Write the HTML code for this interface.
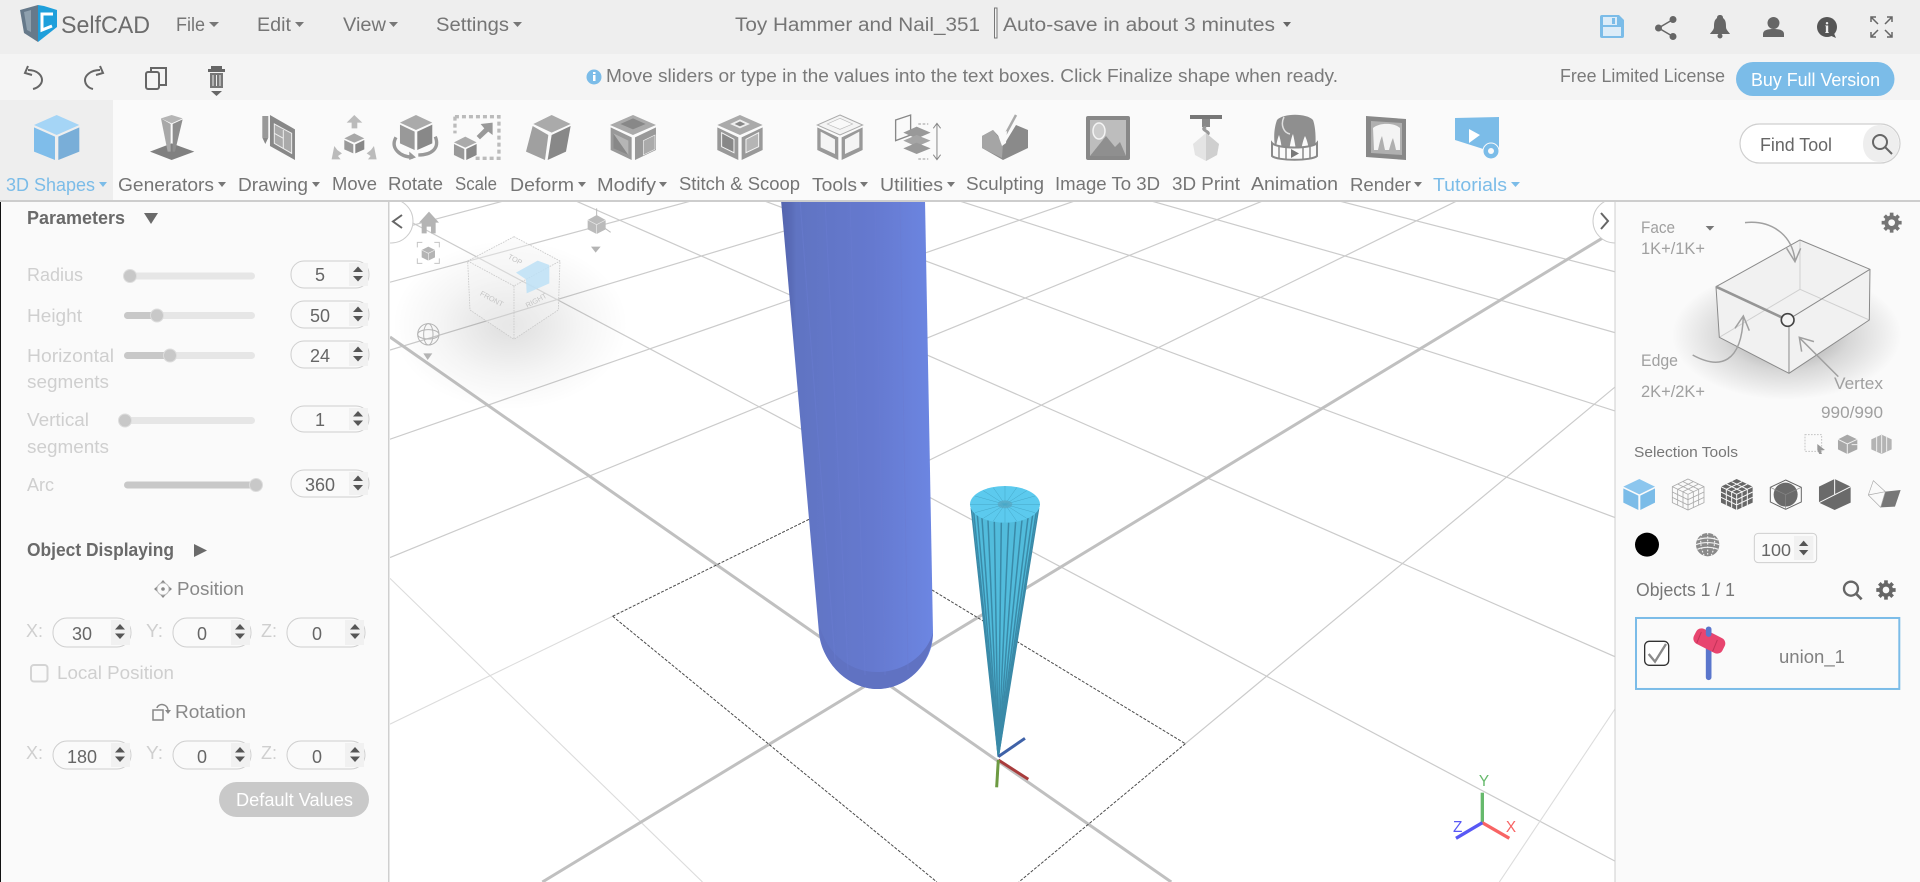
<!DOCTYPE html>
<html><head><meta charset="utf-8"><title>SelfCAD</title>
<style>
html,body{margin:0;padding:0;background:#fff;width:1920px;height:882px;overflow:hidden}
svg{display:block}
text{font-family:"Liberation Sans",sans-serif;fill:#757575}
.h{font-size:19px}
.t{font-size:18.5px}
.l{font-size:18px;fill:#cfcfcf}
.v{font-size:18px;fill:#666;text-anchor:middle}
.b{font-size:18px;font-weight:bold;fill:#6a6a6a}
.r{font-size:16.5px;fill:#a0a0a0}
.s{stroke:#cfcfcf;fill:#fafafa;stroke-width:1}
.g line,.g polyline{vector-effect:non-scaling-stroke;fill:none}
.thin line{stroke:#cbcbcb;stroke-width:1.2}
.thin2 line{stroke:#dcdcdc;stroke-width:1.1}
.thick line{stroke:#c0c0c0;stroke-width:3}
.dash line{stroke:#4a4a4a;stroke-width:1;stroke-dasharray:3 1.5}
</style></head><body>
<svg xmlns="http://www.w3.org/2000/svg" width="1920" height="882" viewBox="0 0 1920 882">
<defs>
<g id="ar"><polygon points="-5,-2.500 5,-2.500 0,-8" fill="#555"/><polygon points="-5,1.500 5,1.500 0,7" fill="#555"/></g>
<linearGradient id="cyl" x1="0" x2="1" y1="0" y2="0"><stop offset="0" stop-color="#5565ae"/><stop offset=".07" stop-color="#5a6cb8"/><stop offset=".1" stop-color="#6074c2"/><stop offset=".6" stop-color="#6579cf"/><stop offset="1" stop-color="#6c86e2"/></linearGradient>
<radialGradient id="sh"><stop offset="0" stop-color="#000" stop-opacity=".42"/><stop offset=".55" stop-color="#000" stop-opacity=".14"/><stop offset="1" stop-color="#000" stop-opacity="0"/></radialGradient>
<radialGradient id="sh2"><stop offset="0" stop-color="#000" stop-opacity=".13"/><stop offset=".6" stop-color="#000" stop-opacity=".04"/><stop offset="1" stop-color="#000" stop-opacity="0"/></radialGradient>
<clipPath id="cv"><rect x="390" y="202" width="1225" height="680"/></clipPath>
</defs>

<rect width="1920" height="882" fill="#fff"/>

<!-- GRID -->
<g clip-path="url(#cv)">
<g class="g" transform="translate(390 200) scale(.78125 .43495)">
<g class="thin">
<line x1="541" y1="730" x2="1368" y2="0"/>
<line x1="0" y1="822" x2="1120" y2="0"/>
<line x1="0" y1="550" x2="880" y2="0"/>
<line x1="0" y1="345" x2="636" y2="0"/>
<line x1="0" y1="189" x2="390" y2="0"/>
<line x1="0" y1="72" x2="150" y2="0"/>
<line x1="1018" y1="1250" x2="1568" y2="430"/>
<line x1="0" y1="25" x2="1568" y2="1520"/>
<line x1="235" y1="0" x2="1568" y2="1050"/>
<line x1="476" y1="0" x2="1568" y2="730"/>
<line x1="725" y1="0" x2="1568" y2="485"/>
<line x1="970" y1="0" x2="1568" y2="305"/>
<line x1="1210" y1="0" x2="1568" y2="165"/>
</g>
<g class="thin2">
<line x1="0" y1="1205" x2="285" y2="957"/>
<line x1="1420" y1="1568" x2="1568" y2="1170"/>
<line x1="0" y1="870" x2="400" y2="1568"/>
</g>
<g class="thick">
<line x1="195" y1="1568" x2="1568" y2="70"/>
<line x1="0" y1="315" x2="1000" y2="1568"/>
</g>
<g class="dash">
<line x1="285" y1="957" x2="541" y2="730"/>
<line x1="285" y1="957" x2="700" y2="1568"/>
<line x1="541" y1="730" x2="1018" y2="1250"/>
<line x1="1018" y1="1250" x2="805" y2="1568"/>
</g>
</g>

<!-- view cube shadow & cube -->
<ellipse cx="510" cy="325" rx="118" ry="85" fill="url(#sh2)"/>
<g transform="translate(390 200) scale(.3333)">
<polygon points="372,110 510,183 505,330 372,418 240,330 233,183" fill="#f4f4f4" fill-opacity=".4"/>
<g fill="none" stroke="#c9c9c9" stroke-width="2.500" stroke-dasharray="5 3">
<polygon points="372,110 510,183 505,330 372,418 240,330 233,183"/>
<polyline points="233,183 372,258 510,183"/><line x1="372" y1="258" x2="372" y2="418"/>
</g>
<polygon points="378,218 443,182 478,195 478,250 410,280 408,238" fill="#bde0f6" fill-opacity=".85"/>
<text x="372" y="185" font-size="22" style="fill:#c4c4c4" transform="rotate(28 372 185)" text-anchor="middle">TOP</text>
<text x="302" y="303" font-size="22" style="fill:#c4c4c4" transform="rotate(28 302 303)" text-anchor="middle">FRONT</text>
<text x="442" y="308" font-size="22" style="fill:#c4c4c4" transform="rotate(-28 442 308)" text-anchor="middle">RIGHT</text>
<!-- home -->
<polygon points="117,35 147,68 137,68 137,100 123,100 123,80 110,80 110,100 95,100 95,68 87,68" fill="#b4b4b4"/>
<g fill="none" stroke="#c4c4c4" stroke-width="3"><path d="M82 142V127H97M133 127H148V142M148 175V190H133M97 190H82V175"/></g>
<polygon points="115,140 135,150 135,172 115,182 95,172 95,150" fill="#b4b4b4"/>
<path d="M95 150L115 160L135 150M115 160V182" stroke="#eee" stroke-width="2" fill="none"/>
<!-- gizmo -->
<path d="M620 25V55M645 85L662 97" stroke="#bbb" stroke-width="3"/>
<polygon points="620,45 647,60 647,88 620,102 593,88 593,60" fill="#bbb"/>
<path d="M593 60L620 74L647 60M620 74V102" stroke="#eee" stroke-width="2" fill="none"/>
<polygon points="603,140 632,140 617,158" fill="#b4b4b4"/>
<!-- globe -->
<g fill="none" stroke="#b4b4b4" stroke-width="3"><circle cx="115" cy="403" r="32"/><ellipse cx="115" cy="403" rx="14" ry="32"/><ellipse cx="115" cy="403" rx="32" ry="14"/></g>
<polygon points="100,460 127,460 113,480" fill="#b4b4b4"/>
</g>

<!-- CYLINDER -->
<path d="M781 200L819 633C822 665 852 689 877 689C905 689 933 665 933 633L925 200Z" fill="url(#cyl)"/>
<path d="M819 625L821 640C826 668 852 689 877 689C905 689 930 668 933 633C926 655 905 672 877 672C850 672 828 655 819 625Z" fill="#6072c2"/>
<g stroke="#6a7cd2" stroke-width="1" opacity=".5"><line x1="800" y1="200" x2="835" y2="660"/><line x1="825" y1="200" x2="848" y2="670"/><line x1="850" y1="200" x2="865" y2="675"/><line x1="875" y1="200" x2="885" y2="675"/><line x1="900" y1="200" x2="908" y2="670"/></g>
<!-- CONE -->
<g transform="translate(780 460) scale(.3333)">
<polygon points="572,135 778,135 655,890" fill="#52bcdc"/>
<g stroke="#3a8aa8" stroke-width="4.500">
<line x1="776" y1="144" x2="655" y2="890"/><line x1="769" y1="155" x2="655" y2="890"/><line x1="758" y1="165" x2="655" y2="890"/><line x1="744" y1="174" x2="655" y2="890"/><line x1="726" y1="181" x2="655" y2="890"/><line x1="707" y1="185" x2="655" y2="890"/><line x1="686" y1="188" x2="655" y2="890"/><line x1="664" y1="188" x2="655" y2="890"/><line x1="643" y1="185" x2="655" y2="890"/><line x1="624" y1="181" x2="655" y2="890"/><line x1="606" y1="174" x2="655" y2="890"/><line x1="592" y1="165" x2="655" y2="890"/><line x1="581" y1="155" x2="655" y2="890"/><line x1="574" y1="144" x2="655" y2="890"/>
</g>
<ellipse cx="675" cy="133" rx="105" ry="55" fill="#5ccaee"/>
<ellipse cx="675" cy="133" rx="22" ry="12" fill="#5fb0cc"/>
<g stroke="#46a8c8" stroke-width="1.500"><line x1="570" y1="133" x2="780" y2="133"/><line x1="675" y1="78" x2="675" y2="188"/><line x1="610" y1="92" x2="740" y2="175"/><line x1="740" y1="92" x2="610" y2="175"/><line x1="640" y1="83" x2="710" y2="183"/><line x1="710" y1="83" x2="640" y2="183"/><line x1="585" y1="108" x2="765" y2="158"/><line x1="765" y1="108" x2="585" y2="158"/></g>
<line x1="655" y1="890" x2="735" y2="835" stroke="#3f62a8" stroke-width="9"/>
<line x1="655" y1="900" x2="745" y2="958" stroke="#a83c3c" stroke-width="9"/>
<line x1="655" y1="900" x2="650" y2="982" stroke="#6d9a42" stroke-width="9"/>
</g>
<!-- axis indicator -->
<g transform="translate(1420 750) scale(.3333)">
<line x1="187" y1="128" x2="187" y2="220" stroke="#66b96c" stroke-width="10"/>
<line x1="187" y1="218" x2="268" y2="265" stroke="#f86464" stroke-width="10"/>
<line x1="187" y1="218" x2="108" y2="265" stroke="#5858f5" stroke-width="10"/>
<text x="192" y="108" font-size="46" style="fill:#66b96c" text-anchor="middle">Y</text>
<text x="273" y="246" font-size="46" style="fill:#f86464" text-anchor="middle">X</text>
<text x="113" y="246" font-size="46" style="fill:#5858f5" text-anchor="middle">Z</text>
</g>
<!-- collapse arrows -->
<circle cx="391" cy="221" r="22" fill="#fff" stroke="#ccc"/>
<path d="M402 215L393 221.500L402 228" fill="none" stroke="#666" stroke-width="2"/>
<circle cx="1615" cy="221" r="22" fill="#fff" stroke="#ccc"/>
<path d="M1601 213L1608 221L1601 229" fill="none" stroke="#666" stroke-width="2"/>
</g>

<!-- LEFT PANEL -->
<rect x="0" y="200" width="389" height="682" fill="#fafafa"/>
<rect x="0" y="200" width="1" height="682" fill="#111"/>
<rect x="388" y="200" width="1.500" height="682" fill="#cfcfcf"/>
<text class="b" x="27" y="224" textLength="98" lengthAdjust="spacingAndGlyphs">Parameters</text>
<polygon points="144,213 158,213 151,224" fill="#6a6a6a"/>

<text class="l" x="27" y="281" textLength="56" lengthAdjust="spacingAndGlyphs">Radius</text>
<rect x="124" y="272.500" width="131" height="7" rx="3.500" fill="#e6e6e6"/>
<circle cx="130" cy="276" r="6.500" fill="#c8c8c8" stroke="#ddd"/>
<rect class="s" x="291" y="261" width="78" height="27" rx="13"/>
<rect x="349" y="263" width="19" height="23" fill="#f1f1f1"/>
<use href="#ar" x="358" y="274.500"/>
<text class="v" x="320" y="281">5</text>

<text class="l" x="27" y="322" textLength="55" lengthAdjust="spacingAndGlyphs">Height</text>
<rect x="124" y="312" width="131" height="7" rx="3.500" fill="#e6e6e6"/>
<rect x="124" y="312" width="33" height="7" rx="3.500" fill="#c8c8c8"/>
<circle cx="157" cy="315.500" r="6.500" fill="#c8c8c8" stroke="#ddd"/>
<rect class="s" x="291" y="301" width="78" height="27" rx="13"/>
<rect x="349" y="303" width="19" height="23" fill="#f1f1f1"/>
<use href="#ar" x="358" y="314.500"/>
<text class="v" x="320" y="322">50</text>

<text class="l" x="27" y="362" textLength="87" lengthAdjust="spacingAndGlyphs">Horizontal</text>
<text class="l" x="27" y="388" textLength="82" lengthAdjust="spacingAndGlyphs">segments</text>
<rect x="124" y="352" width="131" height="7" rx="3.500" fill="#e6e6e6"/>
<rect x="124" y="352" width="46" height="7" rx="3.500" fill="#c8c8c8"/>
<circle cx="170" cy="355.500" r="6.500" fill="#c8c8c8" stroke="#ddd"/>
<rect class="s" x="291" y="341" width="78" height="27" rx="13"/>
<rect x="349" y="343" width="19" height="23" fill="#f1f1f1"/>
<use href="#ar" x="358" y="354.500"/>
<text class="v" x="320" y="362">24</text>

<text class="l" x="27" y="426" textLength="62" lengthAdjust="spacingAndGlyphs">Vertical</text>
<text class="l" x="27" y="453" textLength="82" lengthAdjust="spacingAndGlyphs">segments</text>
<rect x="124" y="417" width="131" height="7" rx="3.500" fill="#e6e6e6"/>
<circle cx="125" cy="420.500" r="6.500" fill="#c8c8c8" stroke="#ddd"/>
<rect class="s" x="291" y="406" width="78" height="26" rx="13"/>
<rect x="349" y="408" width="19" height="22" fill="#f1f1f1"/>
<use href="#ar" x="358" y="419"/>
<text class="v" x="320" y="426">1</text>

<text class="l" x="27" y="491" textLength="27" lengthAdjust="spacingAndGlyphs">Arc</text>
<rect x="124" y="481.500" width="131" height="7" rx="3.500" fill="#c8c8c8"/>
<circle cx="256" cy="485" r="6.500" fill="#c8c8c8" stroke="#ddd"/>
<rect class="s" x="291" y="470" width="78" height="27" rx="13"/>
<rect x="349" y="472" width="19" height="23" fill="#f1f1f1"/>
<use href="#ar" x="358" y="483.500"/>
<text class="v" x="320" y="491">360</text>

<text class="b" x="27" y="556" textLength="147" lengthAdjust="spacingAndGlyphs">Object Displaying</text>
<polygon points="194,544 194,557 207,550.500" fill="#6a6a6a"/>

<!-- position -->
<g fill="#888"><circle cx="163" cy="589" r="1.800"/><polygon points="163,580 160,583.500 166,583.500"/><polygon points="163,598 160,594.500 166,594.500"/><polygon points="154,589 157.500,586 157.500,592"/><polygon points="172,589 168.500,586 168.500,592"/></g>
<circle cx="163" cy="589" r="6" fill="none" stroke="#bbb" stroke-width="1"/>
<text x="177" y="595" font-size="18" style="fill:#888" textLength="67" lengthAdjust="spacingAndGlyphs">Position</text>

<text class="l" x="26" y="637" textLength="17" lengthAdjust="spacingAndGlyphs">X:</text>
<rect class="s" x="53" y="618" width="78" height="29" rx="14"/>
<rect x="111" y="620" width="19" height="25" fill="#f1f1f1"/>
<use href="#ar" x="120" y="632"/>
<text class="v" x="82" y="640">30</text>
<text class="l" x="146" y="637" textLength="17" lengthAdjust="spacingAndGlyphs">Y:</text>
<rect class="s" x="173" y="618" width="78" height="29" rx="14"/>
<rect x="231" y="620" width="19" height="25" fill="#f1f1f1"/>
<use href="#ar" x="240" y="632"/>
<text class="v" x="202" y="640">0</text>
<text class="l" x="261" y="637" textLength="16" lengthAdjust="spacingAndGlyphs">Z:</text>
<rect class="s" x="287" y="618" width="78" height="29" rx="14"/>
<rect x="345" y="620" width="19" height="25" fill="#f1f1f1"/>
<use href="#ar" x="355" y="632"/>
<text class="v" x="317" y="640">0</text>

<rect x="31" y="665" width="16.500" height="16.500" rx="3" fill="#fafafa" stroke="#d4d4d4" stroke-width="2"/>
<text class="l" x="57" y="679" textLength="117" lengthAdjust="spacingAndGlyphs">Local Position</text>

<g fill="none" stroke="#888" stroke-width="1.500"><rect x="153" y="710" width="10" height="10"/><path d="M157 708C158 703 168 703 168 711"/></g>
<polygon points="165,710 171,710 168,714" fill="#888"/>
<text x="175" y="718" font-size="18" style="fill:#888" textLength="71" lengthAdjust="spacingAndGlyphs">Rotation</text>

<text class="l" x="26" y="759" textLength="17" lengthAdjust="spacingAndGlyphs">X:</text>
<rect class="s" x="53" y="741" width="78" height="28" rx="14"/>
<rect x="111" y="743" width="19" height="24" fill="#f1f1f1"/>
<use href="#ar" x="120" y="755"/>
<text class="v" x="82" y="763">180</text>
<text class="l" x="146" y="759" textLength="17" lengthAdjust="spacingAndGlyphs">Y:</text>
<rect class="s" x="173" y="741" width="78" height="28" rx="14"/>
<rect x="231" y="743" width="19" height="24" fill="#f1f1f1"/>
<use href="#ar" x="240" y="755"/>
<text class="v" x="202" y="763">0</text>
<text class="l" x="261" y="759" textLength="16" lengthAdjust="spacingAndGlyphs">Z:</text>
<rect class="s" x="287" y="741" width="78" height="28" rx="14"/>
<rect x="345" y="743" width="19" height="24" fill="#f1f1f1"/>
<use href="#ar" x="355" y="755"/>
<text class="v" x="317" y="763">0</text>

<rect x="219" y="782" width="150" height="35" rx="17.500" fill="#c9c9c9"/>
<text x="236" y="806" font-size="18" style="fill:#fff" textLength="117" lengthAdjust="spacingAndGlyphs">Default Values</text>

<!-- RIGHT PANEL -->
<rect x="1615" y="200" width="305" height="682" fill="#fafafa"/>
<rect x="1614.500" y="200" width="1" height="682" fill="#cfcfcf"/>
<g transform="translate(1610 200) scale(.3333)">
<ellipse cx="530" cy="405" rx="345" ry="195" fill="url(#sh)"/>
<polygon points="570,120 780,208 778,360 537,520 328,412 318,260" fill="#f1f1f1"/>
<g fill="none" stroke="#d0d0d0" stroke-width="3"><line x1="570" y1="120" x2="570" y2="268"/><line x1="570" y1="268" x2="778" y2="360"/><line x1="570" y1="268" x2="328" y2="412"/></g>
<g fill="none" stroke="#8a8a8a" stroke-width="3"><polygon points="570,120 780,208 778,360 537,520 328,412 318,260" stroke-linejoin="round"/><line x1="533" y1="360" x2="780" y2="208"/><line x1="537" y1="380" x2="537" y2="520"/></g>
<line x1="318" y1="260" x2="515" y2="352" stroke="#969696" stroke-width="8"/>
<circle cx="533" cy="360" r="19" fill="#f4f4f4" stroke="#444" stroke-width="5"/>
<g fill="none" stroke="#a0a0a0" stroke-width="4.500">
<path d="M405 68C480 60 545 100 555 180M530 145L555 185L572 145"/>
<path d="M248 465C330 510 395 490 400 350M375 385L400 348L418 392"/>
<path d="M685 530L570 415M575 455L568 412L612 425"/>
</g>
<polygon points="287,78 313,78 300,92" fill="#777"/>
<g transform="translate(845 68)" fill="#757575"><circle r="22"/><g stroke="#757575" stroke-width="11"><line x1="0" y1="-30" x2="0" y2="30"/><line x1="-30" y1="0" x2="30" y2="0"/><line x1="-21" y1="-21" x2="21" y2="21"/><line x1="-21" y1="21" x2="21" y2="-21"/></g><circle r="10" fill="#fafafa"/></g>
</g>
<text class="r" x="1641" y="233" textLength="34" lengthAdjust="spacingAndGlyphs">Face</text>
<text class="r" x="1641" y="254" textLength="64" lengthAdjust="spacingAndGlyphs">1K+/1K+</text>
<text class="r" x="1641" y="366" textLength="37" lengthAdjust="spacingAndGlyphs">Edge</text>
<text class="r" x="1641" y="397" textLength="64" lengthAdjust="spacingAndGlyphs">2K+/2K+</text>
<text class="r" x="1834" y="389" textLength="49" lengthAdjust="spacingAndGlyphs">Vertex</text>
<text class="r" x="1821" y="418" textLength="62" lengthAdjust="spacingAndGlyphs">990/990</text>

<g transform="translate(1610 430) scale(.3333)">
<rect x="585" y="14" width="50" height="50" fill="none" stroke="#c4c4c4" stroke-width="3" stroke-dasharray="5 4"/>
<polygon points="622,42 645,60 632,62 636,72 628,72 622,60" fill="#999"/>
<polygon points="712,14 742,28 742,58 712,72 684,58 684,28" fill="#a8a8a8"/>
<path d="M684 28L712 42L742 28M712 42V72M725 44H745" stroke="#f0f0f0" stroke-width="3" fill="none"/>
<polygon points="815,14 845,28 845,58 815,72 784,58 784,28" fill="#b4b4b4"/>
<path d="M800 20V65M815 15V70M830 20V65" stroke="#eee" stroke-width="3" fill="none"/>
<!-- row icons -->
<polygon points="88,147 135,170 88,193 40,170" fill="#8cc6ee"/>
<polygon points="40,175 85,197 85,240 40,218" fill="#7bbce8"/>
<polygon points="91,197 135,175 135,218 91,240" fill="#7bbce8"/>
<g fill="none" stroke="#aaa" stroke-width="2.500">
<polygon points="234,147 282,170 282,218 234,240 187,218 187,170"/><path d="M187 170L234 193L282 170M234 193V240"/>
<path d="M203 162L250 185M219 155L266 178M250 155L203 178M266 162L219 185M203 178V226M219 186V233M250 186V233M266 178V226M187 186L234 209L282 186M187 202L234 225L282 202"/>
</g>
<polygon points="380,147 428,170 428,218 380,240 333,218 333,170" fill="#666"/>
<g fill="none" stroke="#fafafa" stroke-width="3"><path d="M333 170L380 193L428 170M380 193V240M349 162L396 185M365 155L412 178M396 155L349 178M412 162L365 185M349 178V226M365 186V233M396 186V233M412 178V226M333 186L380 209L428 186M333 202L380 225L428 202"/></g>
<polygon points="527,150 574,172 574,216 527,238 481,216 481,172" fill="none" stroke="#666" stroke-width="3"/>
<circle cx="527" cy="194" r="36" fill="#6a6a6a"/>
<path d="M481 172L527 194L574 172M527 194V238" fill="none" stroke="#888" stroke-width="2"/>
<polygon points="674,147 722,170 722,218 674,240 627,218 627,170" fill="#6a6a6a"/>
<path d="M627 218L722 170M674 147V193" stroke="#fafafa" stroke-width="3" fill="none"/>
<polygon points="826,185 872,180 855,230 812,232" fill="#777"/>
<path d="M790 152L826 185L812 232L775 195Z M775 195L826 185" fill="none" stroke="#aaa" stroke-width="2"/>
<!-- color -->
<circle cx="111" cy="344" r="36" fill="#000"/>
<circle cx="293" cy="344" r="35" fill="#8a8a8a"/>
<g stroke="#eee" stroke-width="3.500" fill="none"><path d="M262 330C280 322 305 322 324 330M258 344C280 336 305 336 328 344M262 358C280 350 305 350 324 358"/><path d="M275 313C268 335 275 360 282 376M293 309V379M311 313C318 335 311 360 304 376" stroke-dasharray="5 5"/></g>
<rect x="433" y="310" width="187" height="88" rx="12" fill="#fafafa" stroke="#cfcfcf" stroke-width="3"/>
<rect x="552" y="318" width="58" height="72" fill="#f1f1f1"/>
<polygon points="567,348 595,348 581,332" fill="#555"/><polygon points="567,360 595,360 581,376" fill="#555"/>
<text x="453" y="378" font-size="54" style="fill:#666" textLength="90" lengthAdjust="spacingAndGlyphs">100</text>
<!-- search gear -->
<circle cx="723" cy="476" r="21" fill="none" stroke="#666" stroke-width="7"/>
<line x1="739" y1="492" x2="755" y2="508" stroke="#666" stroke-width="8"/>
<g transform="translate(828 480)" fill="#666"><circle r="21"/><g stroke="#666" stroke-width="11"><line x1="0" y1="-29" x2="0" y2="29"/><line x1="-29" y1="0" x2="29" y2="0"/><line x1="-20" y1="-20" x2="20" y2="20"/><line x1="-20" y1="20" x2="20" y2="-20"/></g><circle r="10" fill="#fafafa"/></g>
<!-- item -->
<rect x="78" y="564" width="790" height="213" fill="#fafafa" stroke="#7bbce8" stroke-width="6"/>
<rect x="104" y="634" width="72" height="72" rx="14" fill="#fff" stroke="#333" stroke-width="4"/>
<path d="M116 672L135 695L168 642" fill="none" stroke="#8a8a8a" stroke-width="7"/>
<line x1="296" y1="600" x2="296" y2="742" stroke="#5a76cc" stroke-width="17" stroke-linecap="round"/>
<rect x="250" y="608" width="96" height="50" rx="18" fill="#e8456f" transform="rotate(27 298 633)"/>
<path d="M274 606L260 640M322 630L308 664" stroke="#c23358" stroke-width="3"/>
<line x1="296" y1="598" x2="296" y2="612" stroke="#5a76cc" stroke-width="17" stroke-linecap="round"/>
</g>
<text x="1634" y="457" font-size="15" style="fill:#777" textLength="104" lengthAdjust="spacingAndGlyphs">Selection Tools</text>
<text x="1636" y="596" font-size="18" style="fill:#777" textLength="99" lengthAdjust="spacingAndGlyphs">Objects 1 / 1</text>
<text x="1779" y="663" font-size="18" style="fill:#808080" textLength="66" lengthAdjust="spacingAndGlyphs">union_1</text>

<!-- HEADER -->
<rect width="1920" height="54" fill="#eee"/>
<rect y="54" width="1920" height="46" fill="#f4f4f4"/>
<rect y="100" width="1920" height="100" fill="#fafafa"/>
<rect y="100" width="113" height="100" fill="#eee"/>
<rect y="200" width="1920" height="2" fill="#cdcdcd"/>

<!-- logo -->
<polygon points="20,10 38,5 38,42 24,33" fill="#66798a"/>
<polygon points="38,5 44,6 57,10 57,27 38,42" fill="#1e9fdb"/>
<path d="M53 14H42V30L52 26" fill="none" stroke="#fff" stroke-width="3"/>
<polygon points="24,12 31,10 31,32 27,30" fill="#8ea0ae"/>
<text x="61" y="33" font-size="24" style="fill:#6c6c6c" textLength="89" lengthAdjust="spacingAndGlyphs">SelfCAD</text>

<text class="h" x="176" y="31" textLength="29" lengthAdjust="spacingAndGlyphs">File</text>
<polygon points="209,22 219,22 214,27" fill="#777"/>
<text class="h" x="257" y="31" textLength="34" lengthAdjust="spacingAndGlyphs">Edit</text>
<polygon points="295,22 304,22 299.500,27" fill="#777"/>
<text class="h" x="343" y="31" textLength="43" lengthAdjust="spacingAndGlyphs">View</text>
<polygon points="389,22 398,22 393.500,27" fill="#777"/>
<text class="h" x="436" y="31" textLength="73" lengthAdjust="spacingAndGlyphs">Settings</text>
<polygon points="513,22 522,22 517.500,27" fill="#777"/>
<text class="h" x="735" y="31" textLength="245" lengthAdjust="spacingAndGlyphs">Toy Hammer and Nail_351</text>
<rect x="994.500" y="8" width="2.500" height="30" fill="#f4f4f4" stroke="#777" stroke-width="1"/>
<text class="h" x="1003" y="31" textLength="272" lengthAdjust="spacingAndGlyphs">Auto-save in about 3 minutes</text>
<polygon points="1283,22 1291,22 1287,27" fill="#666"/>

<!-- right icons -->
<path d="M1602 15H1619L1624 20V36Q1624 38 1622 38H1602Q1600 38 1600 36V17Q1600 15 1602 15Z" fill="#7bbce8"/>
<rect x="1603" y="27" width="18" height="9" fill="#dcecf8"/>
<rect x="1603" y="17" width="14" height="8" fill="#dcecf8"/><rect x="1612" y="18" width="3" height="6" fill="#7bbce8"/>
<g fill="#666"><circle cx="1673" cy="19.500" r="3.500"/><circle cx="1658.500" cy="28" r="3.500"/><circle cx="1673" cy="36.500" r="3.500"/></g>
<path d="M1673 19.500L1658.500 28L1673 36.500" fill="none" stroke="#666" stroke-width="1.500"/>
<path d="M1720 15C1722 15 1723 16 1723 18C1726 20 1726 24 1726 27C1726 30 1729 32 1730 34H1710C1711 32 1714 30 1714 27C1714 24 1714 20 1717 18C1717 16 1718 15 1720 15Z" fill="#666"/>
<circle cx="1720" cy="36" r="2.500" fill="#666"/>
<circle cx="1773.500" cy="23" r="6" fill="#666"/>
<path d="M1763 37V34C1763 30 1768 29 1773.500 29C1779 29 1784 30 1784 34V37Z" fill="#666"/>
<circle cx="1827" cy="27" r="10" fill="#555"/>
<polygon points="1829,35 1836,38 1833,31" fill="#555"/>
<text x="1827" y="33" font-size="16" font-weight="bold" text-anchor="middle" style="fill:#eee;font-family:'Liberation Serif',serif">i</text>
<g fill="none" stroke="#666" stroke-width="1.500"><path d="M1871 17L1878 24M1871 22V17H1876M1892 17L1885 24M1892 22V17H1887M1871 37L1878 30M1871 32V37H1876M1892 37L1885 30M1892 32V37H1887"/></g>

<!-- second bar -->
<g fill="none" stroke="#666" stroke-width="2">
<path d="M28 70C38 70 42 76 42 80C42 84 38 88 33 89"/><path d="M28 66L25 73L32 75"/>
<path d="M100 70C90 70 85 76 85 80C85 84 88 88 93 89"/><path d="M100 66L103 73L96 75"/>
<rect x="146" y="72" width="13" height="17" rx="2"/><path d="M151 72V68H166V85H159"/>
</g>
<rect x="211" y="66" width="11" height="3" fill="#666"/>
<rect x="208" y="69" width="17" height="3" fill="#666"/>
<rect x="210" y="73" width="13" height="15" fill="#777"/>
<path d="M213 75V86M216.500 75V86M220 75V86" stroke="#eee" stroke-width="1"/>
<polygon points="211,91 222,91 216.500,96" fill="#666"/>

<circle cx="594" cy="77" r="7.500" fill="#7bbce8"/>
<rect x="593" y="75" width="2.500" height="6" fill="#fff"/><rect x="593" y="72" width="2.500" height="2" fill="#fff"/>
<text x="606" y="82" font-size="18" style="fill:#7a7a7a" textLength="732" lengthAdjust="spacingAndGlyphs">Move sliders or type in the values into the text boxes. Click Finalize shape when ready.</text>
<text x="1560" y="82" font-size="18" style="fill:#7a7a7a" textLength="165" lengthAdjust="spacingAndGlyphs">Free Limited License</text>
<rect x="1736" y="62" width="158.500" height="34" rx="17" fill="#7bbce8"/>
<text x="1751" y="86" font-size="18" style="fill:#fff" textLength="129" lengthAdjust="spacingAndGlyphs">Buy Full Version</text>

<!-- toolbar labels -->
<text class="t" style="fill:#7bbce8" x="6" y="191" textLength="89" lengthAdjust="spacingAndGlyphs">3D Shapes</text>
<polygon points="99,182 107,182 103,187" fill="#7bbce8"/>
<text class="t" x="118" y="191" textLength="96" lengthAdjust="spacingAndGlyphs">Generators</text>
<polygon points="218,182 226,182 222,187" fill="#777"/>
<text class="t" x="238" y="191" textLength="70" lengthAdjust="spacingAndGlyphs">Drawing</text>
<polygon points="312,182 320,182 316,187" fill="#777"/>
<text class="t" x="332" y="190" textLength="45" lengthAdjust="spacingAndGlyphs">Move</text>
<text class="t" x="388" y="190" textLength="55" lengthAdjust="spacingAndGlyphs">Rotate</text>
<text class="t" x="455" y="190" textLength="42" lengthAdjust="spacingAndGlyphs">Scale</text>
<text class="t" x="510" y="191" textLength="64" lengthAdjust="spacingAndGlyphs">Deform</text>
<polygon points="578,182 586,182 582,187" fill="#777"/>
<text class="t" x="597" y="191" textLength="59" lengthAdjust="spacingAndGlyphs">Modify</text>
<polygon points="659,182 667,182 663,187" fill="#777"/>
<text class="t" x="679" y="190" textLength="121" lengthAdjust="spacingAndGlyphs">Stitch &amp; Scoop</text>
<text class="t" x="812" y="191" textLength="45" lengthAdjust="spacingAndGlyphs">Tools</text>
<polygon points="860,182 868,182 864,187" fill="#777"/>
<text class="t" x="880" y="191" textLength="63" lengthAdjust="spacingAndGlyphs">Utilities</text>
<polygon points="947,182 955,182 951,187" fill="#777"/>
<text class="t" x="966" y="190" textLength="78" lengthAdjust="spacingAndGlyphs">Sculpting</text>
<text class="t" x="1055" y="190" textLength="105" lengthAdjust="spacingAndGlyphs">Image To 3D</text>
<text class="t" x="1172" y="190" textLength="68" lengthAdjust="spacingAndGlyphs">3D Print</text>
<text class="t" x="1251" y="190" textLength="87" lengthAdjust="spacingAndGlyphs">Animation</text>
<text class="t" x="1350" y="191" textLength="61" lengthAdjust="spacingAndGlyphs">Render</text>
<polygon points="1414,182 1422,182 1418,187" fill="#777"/>
<text class="t" style="fill:#7bbce8" x="1433" y="191" textLength="74" lengthAdjust="spacingAndGlyphs">Tutorials</text>
<polygon points="1511,182 1520,182 1515.500,187" fill="#7bbce8"/>

<!-- toolbar icons (left group) -->
<g transform="translate(0 100) scale(.3333)">
<polygon points="170,45 238,75 170,105 102,75" fill="#a5d5f6"/>
<polygon points="102,82 165,110 165,180 102,155" fill="#7fbdea"/>
<polygon points="175,110 238,82 238,155 175,180" fill="#79aed8"/>
<!-- generators -->
<polygon points="450,155 515,130 583,155 515,180" fill="#808080"/>
<polygon points="483,55 512,72 512,155 503,155" fill="#a8a8a8"/>
<polygon points="518,72 548,58 525,155 518,155" fill="#8e8e8e"/>
<polygon points="483,55 515,45 548,55 515,70" fill="#b5b5b5"/>
<!-- drawing -->
<rect x="787" y="48" width="18" height="65" fill="#999"/><polygon points="787,113 805,113 796,132" fill="#888"/>
<polygon points="810,45 885,88 885,180 810,138" fill="#888"/>
<polygon points="823,72 875,100 875,160 823,130" fill="#aaa" stroke="#eee" stroke-width="3"/>
<path d="M823 100L850 115V90M850 115V145" stroke="#eee" stroke-width="3" fill="none"/>
<!-- move -->
<polygon points="1063,45 1087,68 1072,68 1072,85 1055,85 1055,68 1040,68" fill="#bbb"/>
<polygon points="1063,100 1093,115 1063,128 1033,115" fill="#a8a8a8"/>
<polygon points="1033,120 1060,133 1060,160 1033,148" fill="#999"/>
<polygon points="1066,133 1093,120 1093,148 1066,160" fill="#888"/>
<polygon points="995,178 1003,138 1012,150 1026,160 1014,168 1022,178" fill="#bbb"/>
<polygon points="1130,178 1122,138 1113,150 1100,160 1112,168 1104,178" fill="#bbb"/>
<!-- rotate -->
<path d="M1188 112C1170 145 1200 170 1238 172M1255 165C1295 165 1320 145 1306 110" fill="none" stroke="#999" stroke-width="10"/>
<polygon points="1228,155 1248,172 1228,180" fill="#999"/>
<polygon points="1248,45 1297,68 1248,90 1200,68" fill="#aaa"/>
<polygon points="1200,74 1244,95 1244,150 1200,130" fill="#999"/>
<polygon points="1252,95 1297,74 1297,130 1252,150" fill="#888"/>
<!-- scale -->
<path d="M1365 50H1497V175H1425M1365 50V100" fill="none" stroke="#bbb" stroke-width="10" stroke-dasharray="12 9"/>
<polygon points="1396,110 1430,127 1396,143 1362,127" fill="#aaa"/>
<polygon points="1362,132 1393,147 1393,180 1362,165" fill="#999"/>
<polygon points="1399,147 1430,132 1430,165 1399,180" fill="#888"/>
<polygon points="1478,68 1478,105 1465,95 1440,118 1430,108 1453,85 1442,72" fill="#999"/>
</g>

<g transform="translate(480 100) scale(.3333)">
<!-- deform -->
<polygon points="215,45 272,72 215,98 160,72" fill="#aaa"/>
<polygon points="158,78 205,105 195,180 138,155" fill="#a0a0a0"/>
<polygon points="215,105 272,78 258,155 203,180" fill="#888"/>
<!-- modify -->
<polygon points="459,45 528,75 459,105 390,75" fill="#aaa"/>
<polygon points="459,55 497,72 459,88 421,72" fill="#888"/>
<polygon points="392,82 455,112 455,180 392,150" fill="#999"/>
<polygon points="400,100 445,122 445,165 400,145" fill="#b5b5b5"/>
<polygon points="400,100 445,165 400,145" fill="#888"/>
<polygon points="465,112 528,82 528,150 465,180" fill="#999"/>
<polygon points="490,122 525,105 525,148 490,165" fill="#aaa" stroke="#eee" stroke-width="2"/>
<!-- stitch -->
<polygon points="780,45 848,75 780,105 712,75" fill="#aaa"/>
<polygon points="780,58 810,72 780,85 750,72" fill="#eee"/>
<polygon points="780,64 796,72 780,79 764,72" fill="#888"/>
<polygon points="712,82 775,112 775,180 712,150" fill="#999"/>
<polygon points="725,98 762,118 762,158 725,140" fill="#888" stroke="#f4f4f4" stroke-width="3"/>
<polygon points="785,112 848,82 848,150 785,180" fill="#999"/>
<polygon points="798,118 836,98 836,140 798,158" fill="#b5b5b5" stroke="#f4f4f4" stroke-width="3"/>
<!-- tools -->
<polygon points="1080,45 1148,75 1080,105 1012,75" fill="#f4f4f4" stroke="#aaa" stroke-width="3"/>
<polygon points="1080,55 1118,72 1080,88 1042,72" fill="#f9f9f9" stroke="#bbb" stroke-width="2"/>
<polygon points="1012,82 1075,112 1075,180 1012,150" fill="#999"/>
<polygon points="1022,95 1065,118 1065,162 1022,142" fill="#f4f4f4"/>
<polygon points="1085,112 1148,82 1148,150 1085,180" fill="#999"/>
<polygon points="1095,118 1138,95 1138,142 1095,162" fill="#f4f4f4"/>
<!-- utilities -->
<polygon points="1247,60 1292,45 1292,105 1247,122" fill="none" stroke="#888" stroke-width="4"/>
<polygon points="1310,80 1352,98 1310,116 1270,98" fill="#999"/>
<polygon points="1310,105 1352,122 1310,140 1270,122" fill="#a5a5a5"/>
<polygon points="1310,128 1352,145 1310,162 1270,145" fill="#999"/>
<path d="M1315 72H1345M1315 177H1345" stroke="#999" stroke-width="3" stroke-dasharray="8 5" fill="none"/>
<path d="M1371 72V177M1360 85L1371 70L1382 85M1360 164L1371 179L1382 164" fill="none" stroke="#888" stroke-width="3"/>
</g>

<!-- sculpting -->
<polygon points="982,136 993,130 1005,143 1016,125 1028,130 1028,148 1003,160 982,148" fill="#8a8a8a"/>
<polygon points="982,136 993,130 1003,143 1002,158 982,148" fill="#a5a5a5"/>
<line x1="1003" y1="139" x2="1016" y2="115" stroke="#aaa" stroke-width="2.500"/>
<polygon points="998,135 1007,131 1006,143 1002,146" fill="#fafafa"/>
<!-- image to 3d -->
<rect x="1086" y="116" width="44" height="44" rx="2" fill="#888"/>
<rect x="1090" y="120" width="36" height="36" fill="#bdbdbd"/>
<polygon points="1090,156 1106,136 1115,147 1120,142 1126,156" fill="#8f8f8f"/>
<ellipse cx="1099" cy="131" rx="6" ry="8" fill="#ccc" stroke="#f4f4f4" stroke-width="1.500"/>
<!-- 3d print -->
<rect x="1190" y="115" width="32" height="4" fill="#777"/>
<rect x="1202" y="119" width="8" height="8" fill="#888"/>
<path d="M1206 127C1198 130 1214 132 1206 135" stroke="#999" stroke-width="3" fill="none"/>
<polygon points="1206,133 1219,144 1217,155 1206,161 1195,155 1193,144" fill="#e4e4e4"/>
<polygon points="1206,133 1219,144 1217,155 1206,161" fill="#cfcfcf"/>
<!-- animation -->
<path d="M1277 120C1283 113 1307 113 1313 120C1316 128 1316 142 1315 150H1309C1308 144 1307 140 1305 136C1303 140 1302 146 1301 150H1296C1295 144 1294 138 1293 134C1291 138 1290 146 1289 150H1282C1281 142 1280 138 1279 135C1277 140 1276 146 1276 150C1273 140 1274 128 1277 120Z" fill="#8f8f8f"/>
<path d="M1284 117C1280 125 1284 133 1290 134" fill="none" stroke="#e0e0e0" stroke-width="1.500"/>
<path d="M1272 143C1277 149 1312 149 1317 143V156C1312 161 1277 161 1272 156Z" fill="#fafafa" stroke="#8a8a8a" stroke-width="2"/>
<path d="M1279 147V159M1310 147V159M1286 148V160M1303 148V160" stroke="#8a8a8a" stroke-width="1.500"/>
<polygon points="1291,149 1291,158 1299,153.500" fill="#777"/>
<!-- render -->
<polygon points="1366,116 1406,119 1406,160 1366,157" fill="#888"/>
<polygon points="1371,121 1402,123 1402,155 1371,153" fill="#b0b0b0"/>
<path d="M1373 128C1380 122 1395 123 1400 128V150H1396C1395 145 1394 142 1393 138C1391 142 1390 147 1389 150H1385C1384 146 1383 140 1382 136C1380 140 1379 146 1378 150H1374Z" fill="#f4f4f4"/>
<!-- tutorials -->
<polygon points="1455,118 1499,117 1499,154 1455,140" fill="#7bbce8"/>
<polygon points="1469,129 1480,135 1469,143" fill="#fff"/>
<circle cx="1491" cy="151" r="8" fill="#7bbce8" stroke="#fafafa" stroke-width="1"/>
<circle cx="1491" cy="151" r="3" fill="#fafafa"/>

<!-- find tool -->
<rect x="1740" y="124" width="160" height="39" rx="19.500" fill="#fff" stroke="#cfcfcf" stroke-width="1.200"/>
<path d="M1863 144C1863 134 1869 125 1880 125C1892 125 1899 134 1899 144C1899 154 1892 162 1880 162C1869 162 1863 154 1863 144Z" fill="#eee"/>
<text x="1760" y="151" font-size="18" style="fill:#666" textLength="72" lengthAdjust="spacingAndGlyphs">Find Tool</text>
<circle cx="1880" cy="142" r="7" fill="none" stroke="#666" stroke-width="2"/>
<line x1="1885" y1="147" x2="1892" y2="154" stroke="#666" stroke-width="2"/>
</svg>
</body></html>
